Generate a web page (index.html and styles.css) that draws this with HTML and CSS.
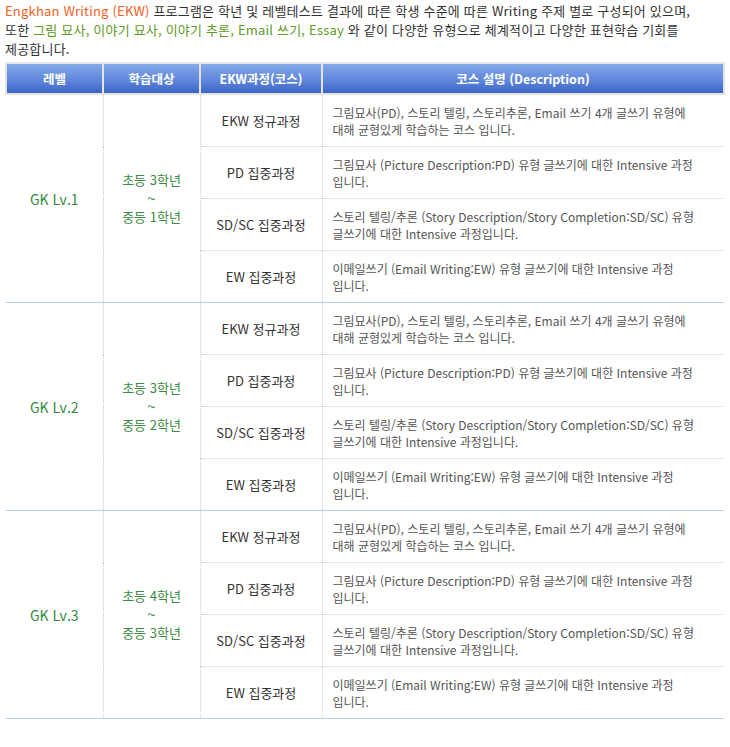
FILE: index.html
```html
<!DOCTYPE html>
<html lang="ko">

<head>
    <meta charset="UTF-8">
    <title>EKW 과정 안내</title>
    <link rel="stylesheet" href="styles.css">
</head>

<body>
    <div class="wrap">
        <p class="intro">
            <span class="orange">Engkhan Writing (EKW)</span> 프로그램은 학년 및 레벨테스트 결과에 따른 학생 수준에 따른 Writing 주제 별로 구성되어 있으며,<br>
            또한 <span class="green">그림 묘사, 이야기 묘사, 이야기 추론, Email 쓰기, Essay</span> 와 같이 다양한 유형으로 체계적이고 다양한 표현학습 기회를<br>
            제공합니다.
        </p>

        <table class="course">
            <thead>
                <tr>
                    <th class="c1">레벨</th>
                    <th class="c2">학습대상</th>
                    <th class="c3">EKW과정(코스)</th>
                    <th class="c4">코스 설명 (Description)</th>
                </tr>
            </thead>
            <tbody>
                <!-- GK Lv.1 -->
                <tr>
                    <td class="level" rowspan="4">GK Lv.1</td>
                    <td class="target" rowspan="4">초등 3학년<br><span class="tilde">~</span><br>중등 1학년</td>
                    <td class="name">EKW 정규과정</td>
                    <td class="desc">그림묘사(PD), 스토리 텔링, 스토리추론, Email 쓰기 4개 글쓰기 유형에<br>대해 균형있게 학습하는 코스 입니다.</td>
                </tr>
                <tr>
                    <td class="name">PD 집중과정</td>
                    <td class="desc">그림묘사 (Picture Description:PD) 유형 글쓰기에 대한 Intensive 과정<br>입니다.</td>
                </tr>
                <tr>
                    <td class="name">SD/SC 집중과정</td>
                    <td class="desc">스토리 텔링/추론 (Story Description/Story Completion:SD/SC) 유형<br>글쓰기에 대한 Intensive 과정입니다.</td>
                </tr>
                <tr class="last">
                    <td class="name">EW 집중과정</td>
                    <td class="desc">이메일쓰기 (Email Writing:EW) 유형 글쓰기에 대한 Intensive 과정<br>입니다.</td>
                </tr>

                <!-- GK Lv.2 -->
                <tr>
                    <td class="level" rowspan="4">GK Lv.2</td>
                    <td class="target" rowspan="4">초등 3학년<br><span class="tilde">~</span><br>중등 2학년</td>
                    <td class="name">EKW 정규과정</td>
                    <td class="desc">그림묘사(PD), 스토리 텔링, 스토리추론, Email 쓰기 4개 글쓰기 유형에<br>대해 균형있게 학습하는 코스 입니다.</td>
                </tr>
                <tr>
                    <td class="name">PD 집중과정</td>
                    <td class="desc">그림묘사 (Picture Description:PD) 유형 글쓰기에 대한 Intensive 과정<br>입니다.</td>
                </tr>
                <tr>
                    <td class="name">SD/SC 집중과정</td>
                    <td class="desc">스토리 텔링/추론 (Story Description/Story Completion:SD/SC) 유형<br>글쓰기에 대한 Intensive 과정입니다.</td>
                </tr>
                <tr class="last">
                    <td class="name">EW 집중과정</td>
                    <td class="desc">이메일쓰기 (Email Writing:EW) 유형 글쓰기에 대한 Intensive 과정<br>입니다.</td>
                </tr>

                <!-- GK Lv.3 -->
                <tr>
                    <td class="level" rowspan="4">GK Lv.3</td>
                    <td class="target" rowspan="4">초등 4학년<br><span class="tilde">~</span><br>중등 3학년</td>
                    <td class="name">EKW 정규과정</td>
                    <td class="desc">그림묘사(PD), 스토리 텔링, 스토리추론, Email 쓰기 4개 글쓰기 유형에<br>대해 균형있게 학습하는 코스 입니다.</td>
                </tr>
                <tr>
                    <td class="name">PD 집중과정</td>
                    <td class="desc">그림묘사 (Picture Description:PD) 유형 글쓰기에 대한 Intensive 과정<br>입니다.</td>
                </tr>
                <tr>
                    <td class="name">SD/SC 집중과정</td>
                    <td class="desc">스토리 텔링/추론 (Story Description/Story Completion:SD/SC) 유형<br>글쓰기에 대한 Intensive 과정입니다.</td>
                </tr>
                <tr class="last">
                    <td class="name">EW 집중과정</td>
                    <td class="desc">이메일쓰기 (Email Writing:EW) 유형 글쓰기에 대한 Intensive 과정<br>입니다.</td>
                </tr>
            </tbody>
        </table>
    </div>
</body>

</html>
```

FILE: styles.css
```css
body {
    margin: 0;
    background-color: #fff;
    font-family: "Noto Sans CJK KR", "Noto Sans", sans-serif;
    color: #555;
}

.wrap {
    padding: 1px 5px 0 5px;
    width: 720px;
}

.intro {
    margin: 0 0 4px 0;
    font-size: 13px;
    line-height: 19px;
    letter-spacing: 0.2px;
    color: #333;
}

.orange {
    color: #f2601f;
}

.green {
    color: #619a25;
}

.course {
    width: 720px;
    border-collapse: collapse;
    font-size: 12px;
    letter-spacing: 0;
}

.course th {
    height: 29px;
    padding: 0;
    border: 2px solid #e4e4e4;
    background: linear-gradient(to bottom, #86a9ea, #5c84da 60%, #3d64c6);
    color: #fff;
    font-weight: bold;
    font-size: 12.5px;
    text-align: center;
}

.c1 { width: 95px; }
.c2 { width: 95px; }
.c3 { width: 120px; }

.course td {
    height: 51px;
    padding: 0;
    border-bottom: 1px dotted #cfcfcf;
    vertical-align: middle;
}

.course tr.last td,
.course td.level,
.course td.target {
    border-bottom: 1px solid #b9cfe8;
}

.level,
.target {
    text-align: center;
    border-right: 1px dotted #cfcfcf;
}

.level {
    color: #2f8a3c;
    font-size: 14px;
}

.target {
    color: #3a8a3f;
    font-size: 13px;
    line-height: 18px;
}

.tilde {
    font-size: 15px;
}

.name {
    text-align: center;
    border-right: 1px dotted #cfcfcf;
    color: #333;
    font-size: 13px;
}

.desc {
    padding-left: 10px !important;
    line-height: 17px;
    color: #555;
}
```
